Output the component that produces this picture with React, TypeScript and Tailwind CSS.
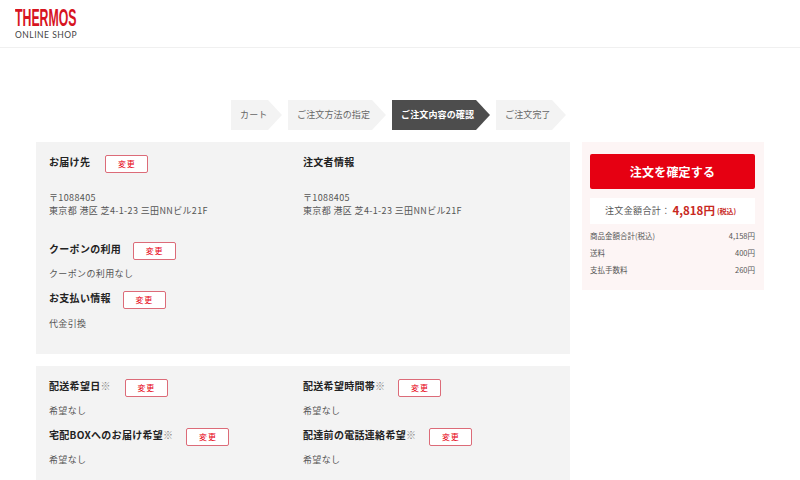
function Change() {
  return (
    <button className="w-[43px] h-[18px] shrink-0 flex items-center justify-center bg-white border-[1.5px] border-[#dc6b78] rounded-[2px] text-[8px] leading-none tracking-[0.1em] text-[#e60012]">
      変更
    </button>
  );
}
function Title({ text, mark, gap, btn = true }: { text: string; mark?: boolean; gap: string; btn?: boolean }) {
  return (
    <div className={`flex items-center h-[18px] ${gap}`}>
      <span className="-mt-[4px] text-[10px] font-bold leading-none tracking-[0.03em] text-[#222]">
        {text}
        {mark && <span className="font-normal text-[#888]">※</span>}
      </span>
      {btn && <Change />}
    </div>
  );
}
function Body({ children, className = "" }: { children: React.ReactNode; className?: string }) {
  return <div className={`text-[9px] leading-[13px] tracking-[0.04em] text-[#555] ${className}`}>{children}</div>;
}
function Step({ label, className }: { label: string; className: string }) {
  return (
    <div className={`h-[30px] flex items-center pl-[9px] text-[9px] tracking-[0.015em] [clip-path:polygon(0_0,calc(100%-14px)_0,100%_50%,calc(100%-14px)_100%,0_100%)] ${className}`}>
      {label}
    </div>
  );
}
function Row({ l, r }: { l: string; r: string }) {
  return (
    <div className="flex justify-between h-[17px] items-center text-[7.5px] text-[#555] leading-none">
      <span>{l}</span>
      <span>{r}</span>
    </div>
  );
}
export default function App() {
  return (
    <div className="w-[800px] h-[480px] overflow-hidden bg-white font-['Noto_Sans_CJK_JP','Noto_Sans',sans-serif]">
      <header className="h-[48px] border-b border-[#f0f0f0] pl-[15px] pt-[8px]">
        <div className="w-[62px] text-[23px] leading-[21px] font-bold text-[#d7141f] font-['Liberation_Sans',sans-serif] scale-x-[0.535] origin-left whitespace-nowrap">THERMOS</div>
        <div className="mt-[1px] text-[8.5px] leading-[10px] tracking-[0.06em] text-[#444] font-['Lato',sans-serif] whitespace-nowrap">ONLINE SHOP</div>
      </header>
      <nav className="mt-[52px] ml-[231px] flex gap-[6px]">
        <Step label="カート" className="w-[51px] bg-[#f3f3f3] text-[#666]" />
        <Step label="ご注文方法の指定" className="w-[98px] bg-[#f3f3f3] text-[#666]" />
        <Step label="ご注文内容の確認" className="w-[98px] bg-[#4d4d4d] text-white font-bold" />
        <Step label="ご注文完了" className="w-[70px] bg-[#f3f3f3] text-[#666]" />
      </nav>
      <div className="mt-[12px] ml-[36px] flex gap-[12px] items-start">
        <div className="w-[534px] flex flex-col gap-[12px]">
          <section className="h-[212px] bg-[#f3f3f3] pl-[13px] pt-[13px] grid grid-cols-[254px_1fr]">
            <div>
              <Title text="お届け先" gap="gap-[15px]" />
              <Body className="mt-[18px]">〒1088405<br />東京都 港区 芝4-1-23 三田NNビル21F</Body>
              <div className="mt-[25px]">
                <Title text="クーポンの利用" gap="gap-[12px]" />
              </div>
              <Body className="mt-[7px]">クーポンの利用なし</Body>
              <div className="mt-[11px]">
                <Title text="お支払い情報" gap="gap-[12px]" />
              </div>
              <Body className="mt-[8px]">代金引換</Body>
            </div>
            <div>
              <Title text="注文者情報" gap="" btn={false} />
              <Body className="mt-[18px]">〒1088405<br />東京都 港区 芝4-1-23 三田NNビル21F</Body>
            </div>
          </section>
          <section className="h-[130px] bg-[#f3f3f3] pl-[13px] pt-[13px] grid grid-cols-[254px_1fr] content-start">
            <div>
              <Title text="配送希望日" mark gap="gap-[14px]" />
              <Body className="mt-[7px]">希望なし</Body>
            </div>
            <div>
              <Title text="配送希望時間帯" mark gap="gap-[13px]" />
              <Body className="mt-[7px]">希望なし</Body>
            </div>
            <div className="mt-[11px]">
              <Title text="宅配BOXへのお届け希望" mark gap="gap-[13px]" />
              <Body className="mt-[7px]">希望なし</Body>
            </div>
            <div className="mt-[11px]">
              <Title text="配達前の電話連絡希望" mark gap="gap-[13px]" />
              <Body className="mt-[7px]">希望なし</Body>
            </div>
          </section>
        </div>
        <aside className="w-[182px] h-[148px] bg-[#fdf5f5] px-[8px] pt-[12px]">
          <button className="w-[165px] h-[35px] bg-[#e60012] rounded-[2px] text-white text-[12px] font-bold tracking-[0.02em] flex items-center justify-center">
            注文を確定する
          </button>
          <div className="mt-[9px] w-[165px] h-[26px] pl-[15px] bg-white flex items-center text-[9px] tracking-[0.04em] text-[#555]">
            <span>注文金額合計：</span>
            <span className="ml-[2px] text-[11.5px] tracking-normal font-bold text-[#c8281e]">4,818円</span>
            <span className="ml-[2px] text-[7px] tracking-normal font-bold text-[#c8281e]">(税込)</span>
          </div>
          <div className="mt-[3px] w-[165px]">
            <Row l="商品金額合計(税込)" r="4,158円" />
            <Row l="送料" r="400円" />
            <Row l="支払手数料" r="260円" />
          </div>
        </aside>
      </div>
    </div>
  );
}
